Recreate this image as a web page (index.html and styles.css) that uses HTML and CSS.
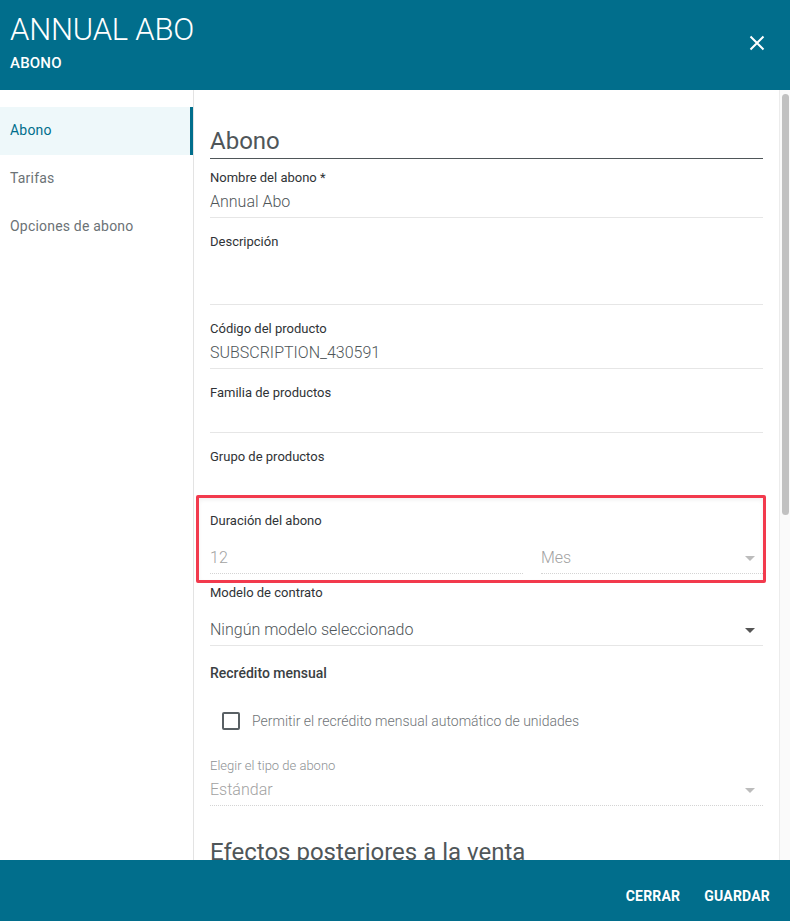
FILE: index.html
```html
<!DOCTYPE html>
<html lang="es">
<head>
    <meta charset="UTF-8">
    <meta name="viewport" content="width=device-width, initial-scale=1.0">
    <title>Annual Abo</title>
    <link rel="stylesheet" href="styles.css">
</head>
<body>
    <div id="dialog">
        <header class="dialog-header">
            <div class="titles">
                <h1 class="title">ANNUAL ABO</h1>
                <div class="subtitle">ABONO</div>
            </div>
            <button class="close-btn" aria-label="Cerrar">
                <svg width="16" height="16" viewBox="0 0 16 16">
                    <path d="M1.5 1.5 L14.5 14.5 M14.5 1.5 L1.5 14.5" stroke="#fff" stroke-width="2" fill="none"/>
                </svg>
            </button>
        </header>

        <div class="dialog-body">
            <nav class="sidebar">
                <a class="nav-item active">Abono</a>
                <a class="nav-item">Tarifas</a>
                <a class="nav-item">Opciones de abono</a>
            </nav>

            <main class="content">
                <h2 class="section-title">Abono</h2>

                <div class="field first">
                    <label>Nombre del abono *</label>
                    <div class="value">Annual Abo</div>
                </div>
                <div class="field">
                    <label>Descripción</label>
                    <div class="value textarea"></div>
                </div>
                <div class="field">
                    <label>Código del producto</label>
                    <div class="value">SUBSCRIPTION_430591</div>
                </div>
                <div class="field">
                    <label>Familia de productos</label>
                    <div class="value"></div>
                </div>
                <div class="field">
                    <label>Grupo de productos</label>
                    <div class="value"></div>
                </div>

                <div class="field-group">
                    <label>Duración del abono</label>
                    <div class="split">
                        <div class="value select disabled number">12</div>
                        <div class="value select disabled unit">Mes<span class="arrow light"></span></div>
                    </div>
                    <div class="highlight"></div>
                </div>

                <div class="field select-field">
                    <label>Modelo de contrato</label>
                    <div class="value select">Ningún modelo seleccionado<span class="arrow"></span></div>
                </div>

                <div class="group-title">Recrédito mensual</div>
                <div class="checkbox-row">
                    <span class="checkbox"></span>
                    <span class="checkbox-label">Permitir el recrédito mensual automático de unidades</span>
                </div>

                <div class="field-group small">
                    <label class="muted">Elegir el tipo de abono</label>
                    <div class="value select disabled">Estándar<span class="arrow light"></span></div>
                </div>

                <h2 class="section-title plain">Efectos posteriores a la venta</h2>
            </main>

            <div class="scrollbar">
                <div class="thumb"></div>
            </div>
        </div>

        <footer class="dialog-footer">
            <button class="text-btn">CERRAR</button>
            <button class="text-btn">GUARDAR</button>
        </footer>
    </div>
</body>
</html>
```

FILE: styles.css
```css
body {
    margin: 0;
    padding: 0;
    font-family: Roboto, "Liberation Sans", sans-serif;
    background: #fff;
    overflow: hidden;
}

#dialog {
    width: 790px;
    height: 921px;
    display: flex;
    flex-direction: column;
}

/* header */
.dialog-header {
    height: 90px;
    flex: none;
    background: #016e8c;
    color: #fff;
    display: flex;
    justify-content: space-between;
    align-items: flex-start;
    padding: 0 25px 0 10px;
}

.title {
    margin: 12px 0 0;
    font-size: 31px;
    font-weight: 300;
    line-height: 36px;
    letter-spacing: -0.2px;
}

.subtitle {
    margin-top: 7px;
    font-size: 15px;
    font-weight: 500;
    line-height: 16px;
    letter-spacing: 0.2px;
}

.close-btn {
    margin-top: 35px;
    padding: 0;
    border: none;
    background: none;
    width: 16px;
    height: 16px;
    cursor: pointer;
}

/* body */
.dialog-body {
    flex: 1;
    display: flex;
    min-height: 0;
    overflow: hidden;
}

.sidebar {
    width: 193px;
    flex: none;
    border-right: 1px solid #e3e3e3;
    padding-top: 17px;
}

.nav-item {
    display: block;
    height: 48px;
    line-height: 46px;
    padding-left: 10px;
    font-size: 14px;
    color: #6b7276;
    letter-spacing: 0.2px;
}

.nav-item.active {
    background: #eef8fa;
    color: #016e8c;
    box-shadow: inset -3px 0 0 #016e8c;
}

.content {
    flex: 1;
    padding: 35px 16px 0;
    position: relative;
    overflow: hidden;
}

.section-title {
    margin: 0;
    font-size: 24px;
    font-weight: 400;
    line-height: 32px;
    color: #4f5659;
    padding-bottom: 1px;
    border-bottom: 1px solid #4f5659;
}

.section-title.plain {
    border-bottom: none;
    margin-top: 30px;
}

.field {
    padding-top: 15px;
    border-bottom: 1px solid #e6e6e6;
}

.field.first {
    padding-top: 10px;
}

.field.select-field {
    padding-top: 10px;
}

label {
    display: block;
    font-size: 13px;
    line-height: 16px;
    padding-top: 1px;
    margin-bottom: -1px;
    color: #2f3336;
}

label.muted {
    font-size: 13px;
    font-weight: 300;
    color: #8d9194;
}

.value {
    font-size: 16px;
    font-weight: 300;
    line-height: 24px;
    height: 24px;
    margin-top: 5px;
    padding-bottom: 3px;
    color: #4f5659;
    position: relative;
}

.value.textarea {
    height: 47px;
}

.select-field .value {
    margin-top: 18px;
}

.arrow {
    position: absolute;
    right: 8px;
    top: 10px;
    width: 0;
    height: 0;
    border-left: 5px solid transparent;
    border-right: 5px solid transparent;
    border-top: 5px solid #555;
}

.arrow.light {
    border-top-color: #bcbcbc;
}

/* disabled inputs with dotted underline */
.field-group {
    padding-top: 15px;
    position: relative;
}

.field-group.small {
    padding-top: 24px;
}

.value.disabled {
    color: #a2a2a2;
    border-bottom: 1px dotted #d4d4d4;
}

.small .value {
    margin-top: 5px;
}

.split {
    display: flex;
    gap: 18px;
}

.split .value {
    margin-top: 18px;
}

.split .number {
    width: 313px;
}

.split .unit {
    flex: 1;
}

.highlight {
    position: absolute;
    left: -14px;
    right: -3px;
    top: -2px;
    bottom: -9px;
    border: 3px solid #f23a4d;
    border-radius: 2px;
    box-shadow: inset 0 2px 4px rgba(0, 0, 0, 0.06);
    pointer-events: none;
}

.group-title {
    margin-top: 19px;
    font-size: 14px;
    font-weight: 500;
    line-height: 16px;
    color: #3a4043;
}

.checkbox-row {
    display: flex;
    align-items: center;
    height: 24px;
    margin-top: 28px;
    padding-left: 12px;
}

.checkbox {
    width: 14px;
    height: 14px;
    border: 2px solid #596064;
    border-radius: 2px;
    margin-right: 12px;
}

.checkbox-label {
    font-size: 14px;
    font-weight: 300;
    color: #6f7477;
}

/* fake scrollbar */
.scrollbar {
    width: 10px;
    flex: none;
    border-left: 1px solid #ececec;
    background: #fafafa;
    padding-top: 4px;
}

.thumb {
    width: 7px;
    height: 421px;
    margin-left: 2px;
    background: #c1c1c1;
    border-radius: 4px;
}

/* footer */
.dialog-footer {
    height: 61px;
    flex: none;
    background: #016e8c;
    display: flex;
    justify-content: flex-end;
    align-items: center;
    gap: 24px;
    padding: 10px 20px 0 0;
    box-sizing: border-box;
}

.text-btn {
    border: none;
    background: none;
    padding: 0;
    color: #fff;
    font-family: Roboto, "Liberation Sans", sans-serif;
    font-size: 14px;
    font-weight: 700;
    letter-spacing: 0.2px;
    cursor: pointer;
}
```
